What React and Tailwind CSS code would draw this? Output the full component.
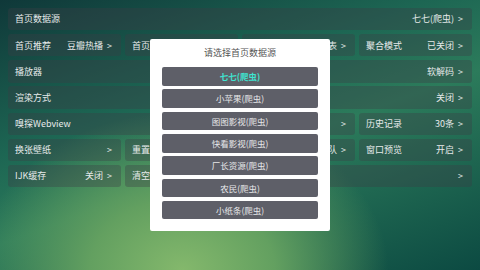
import React from "react";

const rows = [
  [{ span: 4, label: "首页数据源", value: "七七(爬虫)" }],
  [
    { label: "首页推荐", value: "豆瓣热播" },
    { label: "首页样式", value: "宫格" },
    { label: "搜索展示", value: "列表" },
    { label: "聚合模式", value: "已关闭" },
  ],
  [{ span: 4, label: "播放器", value: "软解码" }],
  [{ span: 4, label: "渲染方式", value: "关闭" }],
  [
    { span: 3, label: "嗅探Webview", value: "" },
    { label: "历史记录", value: "30条" },
  ],
  [
    { label: "换张壁纸", value: "" },
    { label: "重置设置", value: "" },
    { label: "播放模式", value: "排队" },
    { label: "窗口预览", value: "开启" },
  ],
  [
    { label: "IJK缓存", value: "关闭" },
    { span: 3, label: "清空缓存", value: "" },
  ],
];

const sources = [
  "七七(爬虫)",
  "小苹果(爬虫)",
  "图图影视(爬虫)",
  "快看影视(爬虫)",
  "厂长资源(爬虫)",
  "农民(爬虫)",
  "小纸条(爬虫)",
];

const spanClass = { 1: "col-span-1", 3: "col-span-3", 4: "col-span-4" };

function Cell({ span = 1, label, value }) {
  return (
    <div
      className={`${spanClass[span]} h-[22.3px] flex items-center justify-between pl-[7px] pr-[9px] rounded-[3px] bg-[#3c3c46]/35 text-[9px] text-[#e6eaea]`}
    >
      <span>{label}</span>
      <span className="flex items-center gap-[4px]">
        {value && <span>{value}</span>}
        <span>&gt;</span>
      </span>
    </div>
  );
}

export default function App() {
  return (
    <div
      className="relative w-[480px] h-[270px] overflow-hidden bg-[radial-gradient(ellipse_55%_75%_at_38%_100%,#84b86c,#63a060_35%,transparent_78%),linear-gradient(160deg,#0f3839_0%,#1d6653_35%,#2c7b5b_55%,#0c4a42_100%)]"
      style={{ fontFamily: '"Noto Sans CJK SC", "Noto Sans", sans-serif' }}
    >
      <div className="grid grid-cols-4 gap-x-[4px] gap-y-[3.87px] px-[8px] pt-[8px]">
        {rows.map((row, i) =>
          row.map((c, j) => <Cell key={`${i}-${j}`} {...c} />)
        )}
      </div>

      <div className="absolute inset-0 flex items-center justify-center">
        <div className="w-[180px] bg-white rounded-[2px] px-[12px] pt-[7px] pb-[12px] flex flex-col">
          <div className="h-[14px] leading-[14px] text-center text-[9px] text-[#555555]">
            请选择首页数据源
          </div>
          <div className="mt-[7.5px] flex flex-col gap-[3.83px]">
            {sources.map((s, i) => (
              <div
                key={s}
                className={`h-[18.5px] rounded-[2px] bg-[#5e5f68] flex items-center justify-center text-[8.5px] ${
                  i === 0 ? "text-[#3fe3d0] font-bold" : "text-[#e8e8ea]"
                }`}
              >
                {s}
              </div>
            ))}
          </div>
        </div>
      </div>
    </div>
  );
}
